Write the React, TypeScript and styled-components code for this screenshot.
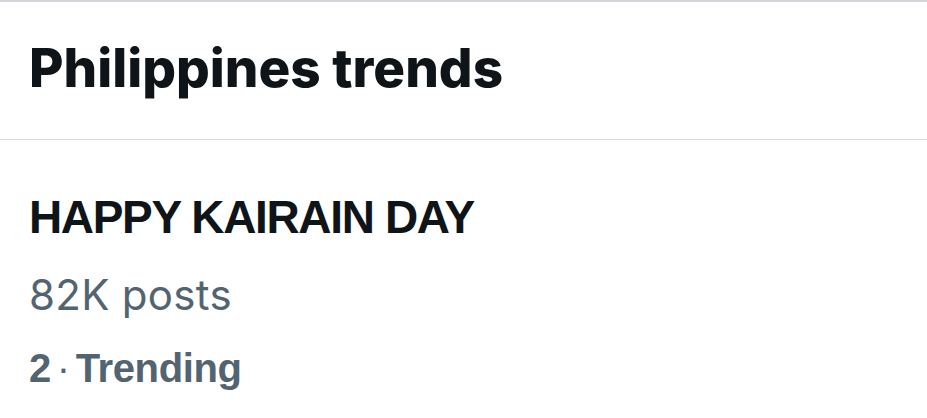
import React from "react";
import styled, { createGlobalStyle } from "styled-components";

const Global = createGlobalStyle`
  html, body { margin: 0; padding: 0; background: #ffffff; }
  body { font-family: "Liberation Sans", Arial, sans-serif; }
`;

const Panel = styled.div`
  width: 927px;
  height: 418px;
  background: #ffffff;
  border-top: 2px solid #d2d6da;
  box-sizing: border-box;
  overflow: hidden;
`;

const Header = styled.div`
  height: 138px;
  box-sizing: border-box;
  border-bottom: 1px solid #dcdcdc;
  display: flex;
  align-items: center;
  padding: 0 29px 4px;
`;

const Title = styled.h2`
  margin: 0;
  font-family: Inter, "Liberation Sans", sans-serif;
  font-weight: 800;
  font-size: 53px;
  letter-spacing: 0;
  color: #0f1419;
  line-height: 1;
`;

const Trend = styled.div`
  display: flex;
  flex-direction: column;
  padding: 54px 29px 0;
`;

const TrendName = styled.div`
  font-weight: 700;
  font-size: 46px;
  letter-spacing: -1.35px;
  color: #0f1419;
  line-height: 1;
`;

const Posts = styled.div`
  font-family: Inter, "Liberation Sans", sans-serif;
  font-size: 42px;
  font-weight: 400;
  letter-spacing: 0.3px;
  color: #536471;
  line-height: 1;
  margin-top: 34px;
`;

const Rank = styled.div`
  font-size: 40px;
  font-weight: 700;
  letter-spacing: -0.4px;
  color: #536471;
  line-height: 1;
  margin-top: 32px;
`;

const Dot = styled.span`
  font-weight: 400;
  margin: 0 6px;
`;

export default function App() {
  return (
    <>
      <Global />
      <Panel>
        <Header>
          <Title>Philippines trends</Title>
        </Header>
        <Trend>
          <TrendName>HAPPY KAIRAIN DAY</TrendName>
          <Posts>82K posts</Posts>
          <Rank>
            2<Dot>·</Dot>Trending
          </Rank>
        </Trend>
      </Panel>
    </>
  );
}
